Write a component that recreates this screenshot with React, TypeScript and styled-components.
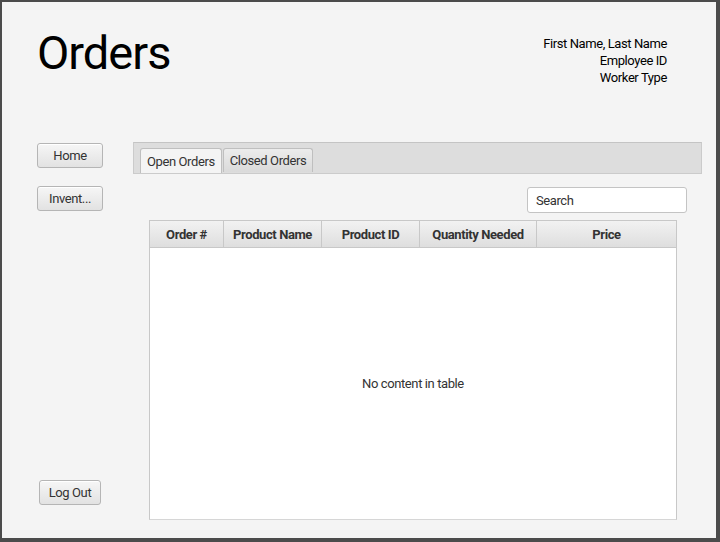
import styled, { createGlobalStyle } from 'styled-components';

const GlobalStyle = createGlobalStyle`
  html, body {
    margin: 0;
    padding: 0;
    background: #4b4b4b;
  }
  * {
    box-sizing: border-box;
  }
`;

const StyledWindow = styled.div`
  width: 720px;
  height: 542px;
  border-style: solid;
  border-color: #4b4b4b;
  border-width: 2px 4px 4px 2px;
  background: #f4f4f4;
  display: flex;
  flex-direction: column;
  font-family: Roboto, 'Liberation Sans', sans-serif;
  font-size: 13px;
  letter-spacing: -0.4px;
  color: #333333;
  overflow: hidden;
`;

const StyledHeader = styled.div`
  display: flex;
  justify-content: space-between;
  align-items: flex-start;
  height: 140px;
  padding: 0 49px 0 35px;
`;

const StyledTitle = styled.h1`
  margin: 24px 0 0 0;
  font-family: Roboto, 'Liberation Sans', sans-serif;
  font-weight: 400;
  font-size: 47px;
  line-height: 54px;
  letter-spacing: -1px;
  color: #000000;
`;

const StyledUserInfo = styled.div`
  margin-top: 33px;
  text-align: right;
  line-height: 17px;
  color: #000000;
`;

const StyledBody = styled.div`
  flex: 1;
  display: flex;
  padding: 0 14px 0 35px;
  gap: 30px;
  min-height: 0;
`;

const StyledSidebar = styled.div`
  width: 66px;
  display: flex;
  flex-direction: column;
  align-items: center;
  padding: 1px 0 33px 0;
  gap: 18px;
`;

const StyledSpacer = styled.div`
  flex: 1;
`;

const StyledButton = styled.button<{ wide?: boolean }>`
  width: ${({ wide }) => (wide ? '66px' : 'auto')};
  height: 25px;
  padding: 0 9px;
  border: 1px solid #b5b5b5;
  border-radius: 3px;
  background: linear-gradient(#f6f6f6, #e2e2e2);
  box-shadow: inset 0 1px 0 #ffffff;
  font-family: inherit;
  font-size: 13px;
  letter-spacing: inherit;
  color: #333333;
  cursor: pointer;
`;

const StyledTabPane = styled.div`
  flex: 1;
  display: flex;
  flex-direction: column;
  min-width: 0;
`;

const StyledTabHeader = styled.div`
  height: 32px;
  display: flex;
  align-items: flex-end;
  gap: 1px;
  padding: 0 0 1px 6px;
  background: #dddddd;
  border: 1px solid #cbcbcb;
  border-top-color: #c4c4c4;
`;

const StyledTab = styled.div<{ selected?: boolean }>`
  height: ${({ selected }) => (selected ? '25px' : '24px')};
  margin-bottom: ${({ selected }) => (selected ? '-1px' : '0')};
  display: flex;
  align-items: center;
  padding: 0 6px;
  border: 1px solid #bfbfbf;
  border-bottom: none;
  border-radius: 3px 3px 0 0;
  background: ${({ selected }) =>
    selected ? '#f4f4f4' : 'linear-gradient(#ececec, #dadada)'};
  color: #333333;
`;

const StyledSearchRow = styled.div`
  display: flex;
  justify-content: flex-end;
  padding: 13px 15px 0 0;
`;

const StyledSearch = styled.input`
  width: 160px;
  height: 26px;
  padding: 0 8px;
  border: 1px solid #c4c4c4;
  border-radius: 3px;
  background: #ffffff;
  font-family: inherit;
  font-size: 13px;
  letter-spacing: inherit;
  color: #333333;
  outline: none;
  &::placeholder {
    color: #333333;
  }
`;

const StyledTable = styled.div`
  flex: 1;
  margin: 7px 25px 18px 16px;
  display: flex;
  flex-direction: column;
  border: 1px solid #c8c8c8;
  border-bottom-color: #d6d6d6;
  background: #ffffff;
`;

const StyledHeaderRow = styled.div`
  display: flex;
  height: 27px;
  border-bottom: 1px solid #c8c8c8;
  background: linear-gradient(#f2f2f2, #dedede);
`;

const StyledColumnHeader = styled.div`
  display: flex;
  align-items: center;
  justify-content: center;
  border-right: 1px solid #c8c8c8;
  font-weight: 700;
  color: #333333;
  &:last-child {
    border-right: none;
  }
`;

const StyledPlaceholder = styled.div`
  flex: 1;
  display: flex;
  align-items: center;
  justify-content: center;
  color: #333333;
`;

const columns = [
  { title: 'Order #', width: 74 },
  { title: 'Product Name', width: 98 },
  { title: 'Product ID', width: 98 },
  { title: 'Quantity Needed', width: 117 },
  { title: 'Price', width: 139 },
];

export default function App(): JSX.Element {
  return (
    <>
      <GlobalStyle />
      <StyledWindow>
        <StyledHeader>
          <StyledTitle>Orders</StyledTitle>
          <StyledUserInfo>
            <div>First Name, Last Name</div>
            <div>Employee ID</div>
            <div>Worker Type</div>
          </StyledUserInfo>
        </StyledHeader>
        <StyledBody>
          <StyledSidebar>
            <StyledButton wide>Home</StyledButton>
            <StyledButton wide>Invent...</StyledButton>
            <StyledSpacer />
            <StyledButton>Log Out</StyledButton>
          </StyledSidebar>
          <StyledTabPane>
            <StyledTabHeader>
              <StyledTab selected>Open Orders</StyledTab>
              <StyledTab>Closed Orders</StyledTab>
            </StyledTabHeader>
            <StyledSearchRow>
              <StyledSearch placeholder="Search" />
            </StyledSearchRow>
            <StyledTable>
              <StyledHeaderRow>
                {columns.map((col) => (
                  <StyledColumnHeader key={col.title} style={{ width: col.width }}>
                    {col.title}
                  </StyledColumnHeader>
                ))}
              </StyledHeaderRow>
              <StyledPlaceholder>No content in table</StyledPlaceholder>
            </StyledTable>
          </StyledTabPane>
        </StyledBody>
      </StyledWindow>
    </>
  );
}
